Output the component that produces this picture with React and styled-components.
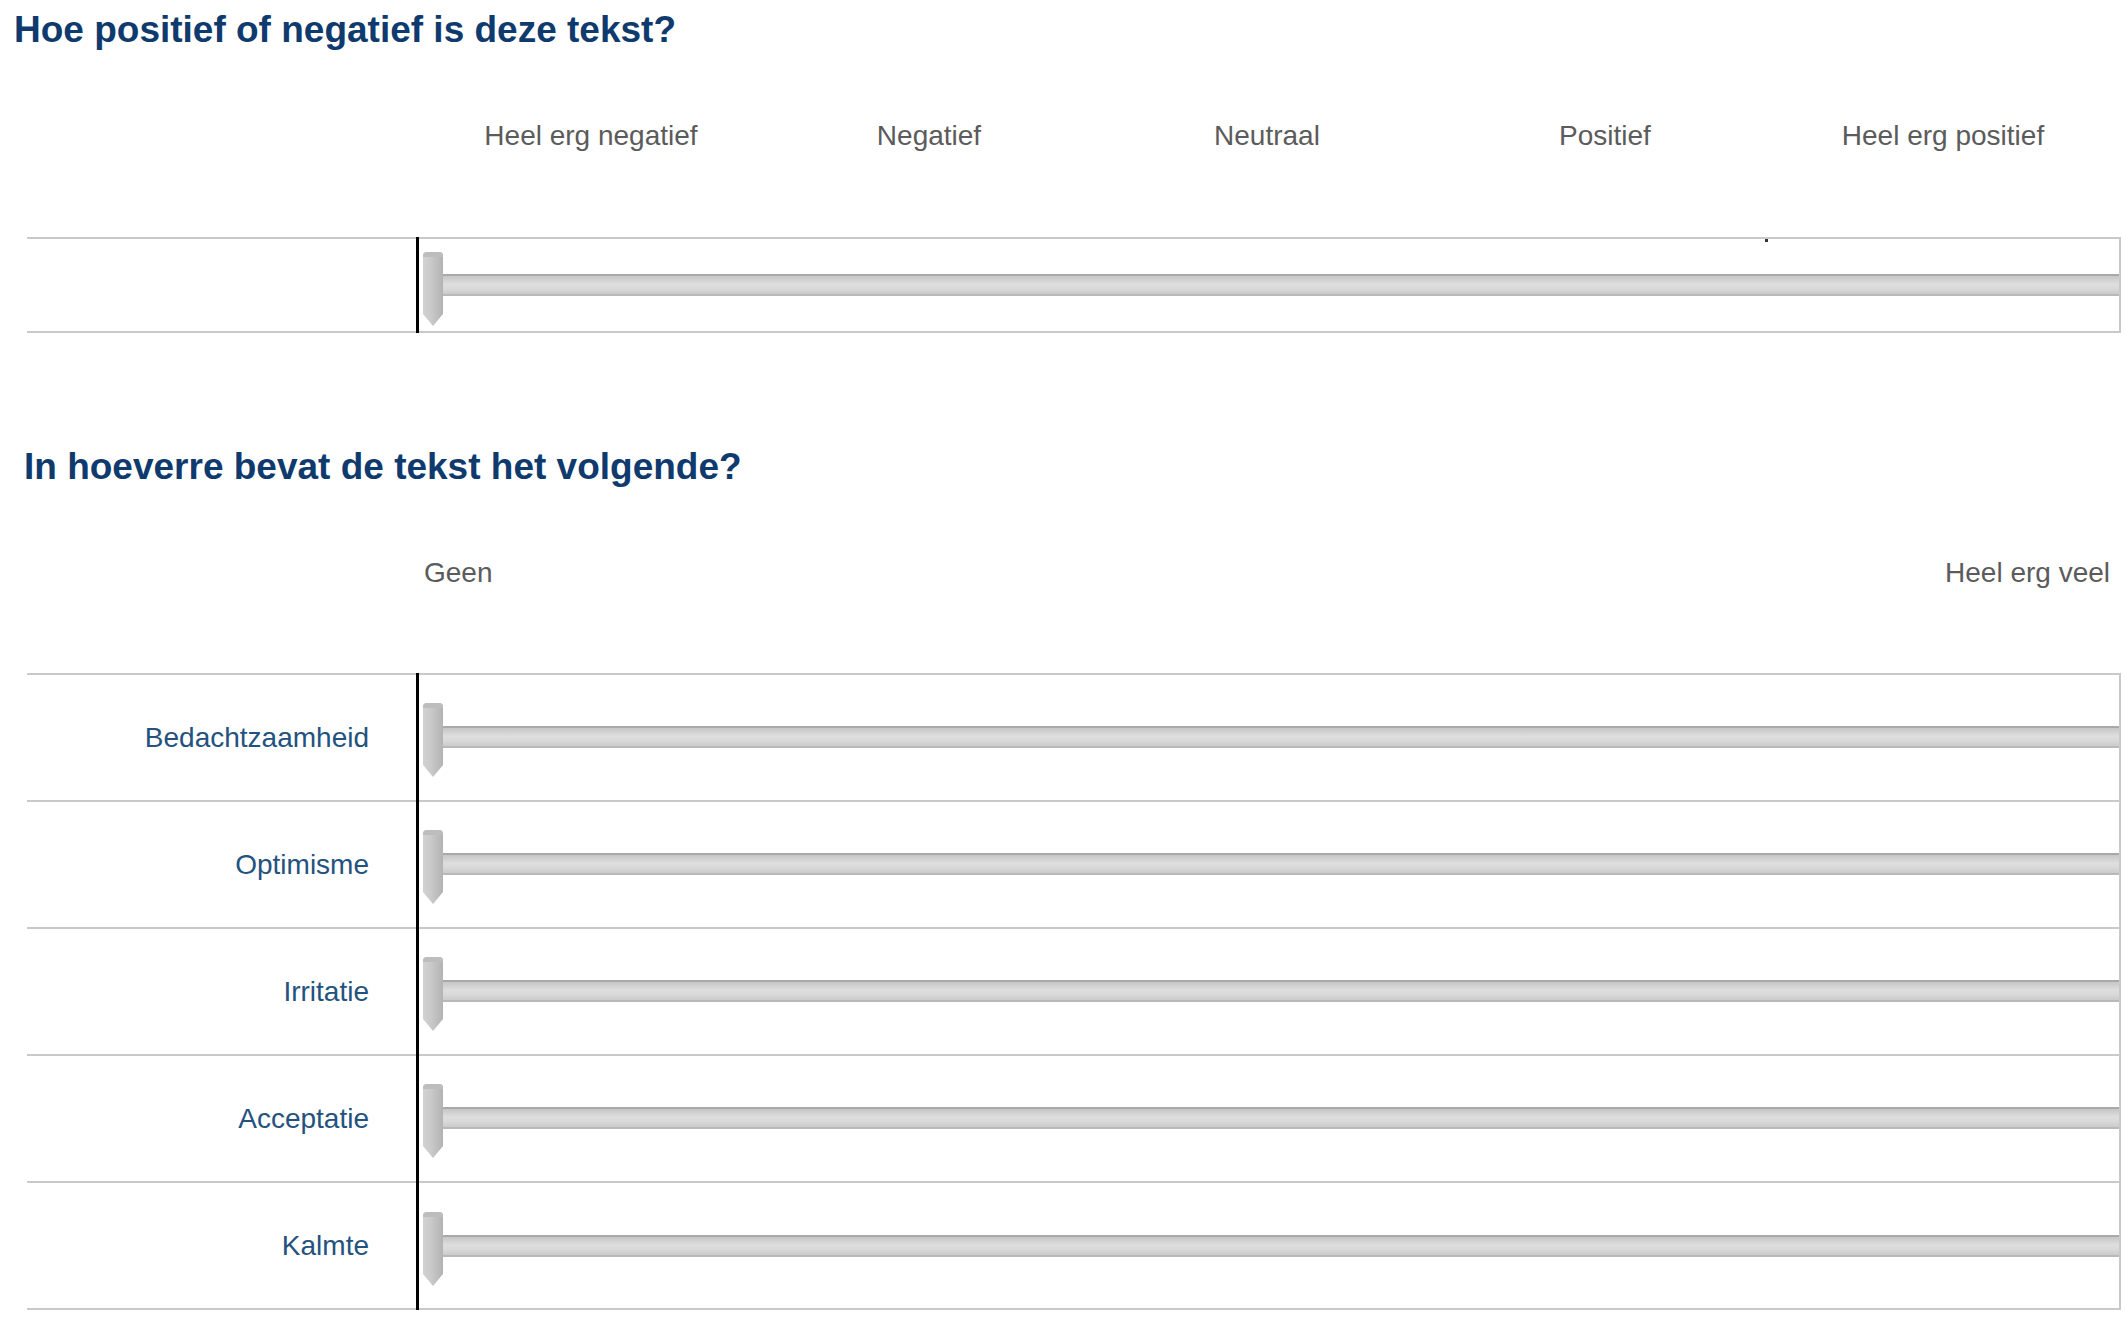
import React from 'react';
import styled, { createGlobalStyle } from 'styled-components';

const GlobalStyle = createGlobalStyle`
  html, body {
    margin: 0;
    padding: 0;
    background: #fff;
  }
  body {
    font-family: "Liberation Sans", Arial, sans-serif;
  }
`;

const Page = styled.div`
  width: 2125px;
  padding-top: 8px;
  box-sizing: border-box;
`;

const Question = styled.h2`
  margin: ${(p) => p.$top}px 0 0 ${(p) => p.$left}px;
  font-size: 37px;
  line-height: 44px;
  font-weight: 700;
  color: #0f3a6e;
`;

const ScaleGrid = styled.div`
  display: grid;
  grid-template-columns: 422px repeat(5, 338px);
  margin-top: 68px;
  font-size: 28px;
  line-height: 32px;
  color: #5b5b5b;
`;

const ScaleLabel = styled.div`
  text-align: center;
`;

const EndLabels = styled.div`
  display: flex;
  justify-content: space-between;
  margin-top: 68px;
  padding: 0 15px 0 424px;
  font-size: 28px;
  line-height: 32px;
  color: #5b5b5b;
`;

const Table = styled.div`
  margin: ${(p) => p.$top}px 0 0 27px;
  width: 2092px;
  border-right: 2px solid #c9c9c9;
  border-bottom: 2px solid #c9c9c9;
`;

const Row = styled.div`
  display: grid;
  grid-template-columns: 389px 1fr;
  box-sizing: border-box;
  height: ${(p) => p.$height}px;
  border-top: 2px solid #c9c9c9;
`;

const RowLabel = styled.div`
  display: flex;
  align-items: center;
  justify-content: flex-end;
  padding-right: 47px;
  font-size: 28px;
  color: #24527e;
`;

const SliderCell = styled.div`
  position: relative;
  display: flex;
  align-items: center;
  margin: -2px 0 ${(p) => (p.$last ? -2 : 0)}px;
  padding-left: 4px;
  border-left: 3px solid #000;
`;

const Thumb = styled.svg`
  position: relative;
  z-index: 1;
  flex: none;
  width: 20px;
  height: 74px;
  margin-top: 7px;
`;

const Track = styled.div`
  flex: 1;
  height: 22px;
  margin-left: -10px;
  box-sizing: border-box;
  border-top: 2px solid #a9a9a9;
  border-bottom: 2px solid #b9b9b9;
  background: linear-gradient(#c6c6c6 0%, #dedede 45%, #d9d9d9 70%, #cbcbcb 100%);
`;

const Tick = styled.span`
  position: absolute;
  top: 2px;
  left: ${(p) => p.$left}px;
  width: 3px;
  height: 3px;
  background: #333;
`;

function SliderThumb({ id }) {
  return (
    <Thumb viewBox="0 0 20 74">
      <defs>
        <linearGradient id={id} x1="0" x2="1" y1="0" y2="0">
          <stop offset="0" stopColor="#d2d2d2" />
          <stop offset="0.35" stopColor="#cbcbcb" />
          <stop offset="1" stopColor="#b3b3b3" />
        </linearGradient>
      </defs>
      <path d="M4 0 H16 Q20 0 20 4 V62 L10 74 L0 62 V4 Q0 0 4 0 Z" fill={`url(#${id})`} />
      <path d="M4 0 H16 Q20 0 20 4 V5 H0 V4 Q0 0 4 0 Z" fill="#bdbdbd" />
    </Thumb>
  );
}

const sentiment = ['Heel erg negatief', 'Negatief', 'Neutraal', 'Positief', 'Heel erg positief'];
const emotions = ['Bedachtzaamheid', 'Optimisme', 'Irritatie', 'Acceptatie', 'Kalmte'];

export default function App() {
  return (
    <Page>
      <GlobalStyle />
      <Question $top={0} $left={14}>Hoe positief of negatief is deze tekst?</Question>
      <ScaleGrid>
        <div />
        {sentiment.map((s) => (
          <ScaleLabel key={s}>{s}</ScaleLabel>
        ))}
      </ScaleGrid>
      <Table $top={85}>
        <Row $height={94}>
          <RowLabel />
          <SliderCell $last>
            <SliderThumb id="thumb-main" />
            <Track />
            <Tick $left={1346} />
          </SliderCell>
        </Row>
      </Table>

      <Question $top={112} $left={24}>In hoeverre bevat de tekst het volgende?</Question>
      <EndLabels>
        <span>Geen</span>
        <span>Heel erg veel</span>
      </EndLabels>
      <Table $top={84}>
        {emotions.map((e, i) => (
          <Row key={e} $height={127}>
            <RowLabel>{e}</RowLabel>
            <SliderCell $last={i === emotions.length - 1}>
              <SliderThumb id={`thumb-${i}`} />
              <Track />
            </SliderCell>
          </Row>
        ))}
      </Table>
    </Page>
  );
}
